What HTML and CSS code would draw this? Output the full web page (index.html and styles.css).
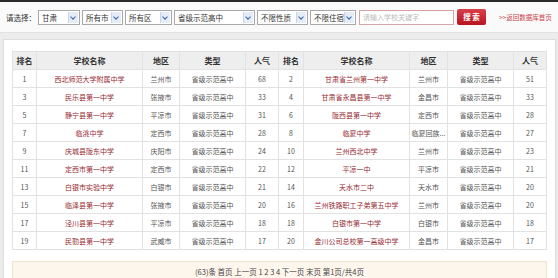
FILE: index.html
```html
<!DOCTYPE html>
<html lang="zh">
<head>
<meta charset="utf-8">
<title>学校排名</title>
<link rel="stylesheet" href="styles.css">
</head>
<body>
<div class="topbar"></div>
<div class="filters">
  <span class="label">请选择：</span>
  <span class="sel w1">甘肃<i class="arr"></i></span>
  <span class="sel w2">所有市<i class="arr"></i></span>
  <span class="sel w3">所有区<i class="arr"></i></span>
  <span class="sel w4">省级示范高中<i class="arr"></i></span>
  <span class="sel w5">不限性质<i class="arr"></i></span>
  <span class="sel w6">不限住宿<i class="arr"></i></span>
  <span class="kw">请输入学校关键字</span>
  <span class="btn">搜 索</span>
  <a class="back" href="#">&gt;&gt;返回数据库首页</a>
</div>
<div class="panel">
  <table class="rank">
    <colgroup>
      <col class="c1"><col class="c2"><col class="c3"><col class="c4"><col class="c5">
      <col class="c6"><col class="c7"><col class="c8"><col class="c9"><col class="c10">
    </colgroup>
    <thead>
      <tr><th>排名</th><th>学校名称</th><th>地区</th><th>类型</th><th>人气</th><th>排名</th><th>学校名称</th><th>地区</th><th>类型</th><th>人气</th></tr>
    </thead>
    <tbody>
      <tr><td>1</td><td class="nm">西北师范大学附属中学</td><td>兰州市</td><td>省级示范高中</td><td>68</td><td>2</td><td class="nm">甘肃省兰州第一中学</td><td>兰州市</td><td>省级示范高中</td><td>51</td></tr>
      <tr><td>3</td><td class="nm">民乐县第一中学</td><td>张掖市</td><td>省级示范高中</td><td>33</td><td>4</td><td class="nm">甘肃省永昌县第一中学</td><td>金昌市</td><td>省级示范高中</td><td>33</td></tr>
      <tr><td>5</td><td class="nm">静宁县第一中学</td><td>平凉市</td><td>省级示范高中</td><td>31</td><td>6</td><td class="nm">陇西县第一中学</td><td>定西市</td><td>省级示范高中</td><td>28</td></tr>
      <tr><td>7</td><td class="nm">临洮中学</td><td>定西市</td><td>省级示范高中</td><td>28</td><td>8</td><td class="nm">临夏中学</td><td>临夏回族...</td><td>省级示范高中</td><td>27</td></tr>
      <tr><td>9</td><td class="nm">庆城县陇东中学</td><td>庆阳市</td><td>省级示范高中</td><td>24</td><td>10</td><td class="nm">兰州西北中学</td><td>兰州市</td><td>省级示范高中</td><td>23</td></tr>
      <tr><td>11</td><td class="nm">定西市第一中学</td><td>定西市</td><td>省级示范高中</td><td>22</td><td>12</td><td class="nm">平凉一中</td><td>平凉市</td><td>省级示范高中</td><td>21</td></tr>
      <tr><td>13</td><td class="nm">白银市实验中学</td><td>白银市</td><td>省级示范高中</td><td>21</td><td>14</td><td class="nm">天水市二中</td><td>天水市</td><td>省级示范高中</td><td>20</td></tr>
      <tr><td>15</td><td class="nm">临泽县第一中学</td><td>张掖市</td><td>省级示范高中</td><td>20</td><td>16</td><td class="nm">兰州铁路职工子弟第五中学</td><td>兰州市</td><td>省级示范高中</td><td>20</td></tr>
      <tr><td>17</td><td class="nm">泾川县第一中学</td><td>平凉市</td><td>省级示范高中</td><td>18</td><td>18</td><td class="nm">白银市第一中学</td><td>白银市</td><td>省级示范高中</td><td>18</td></tr>
      <tr><td>19</td><td class="nm">民勤县第一中学</td><td>武威市</td><td>省级示范高中</td><td>17</td><td>20</td><td class="nm">金川公司总校第一高级中学</td><td>金昌市</td><td>省级示范高中</td><td>17</td></tr>
    </tbody>
  </table>
  <div class="pager">(63)条 首页 上一页 1 2 3 4 下一页 末页 第1页/共4页</div>
</div>
</body>
</html>
```

FILE: styles.css
```css
html, body {
  margin: 0;
  padding: 0;
}
body {
  background: #ececec;
  font-family: "Noto Sans CJK SC", "Noto Sans", sans-serif;
  color: #555;
  width: 558px;
  height: 278px;
  overflow: hidden;
}
.topbar {
  height: 2px;
  background: #2a2a2a;
}
.filters {
  height: 31px;
  background: #fafafa;
  display: flex;
  align-items: center;
  padding-left: 6px;
  box-sizing: border-box;
  border-bottom: 1px solid #e2e2e2;
}
.label {
  font-size: 7.5px;
  color: #333;
  width: 32px;
}
.sel {
  position: relative;
  box-sizing: border-box;
  height: 15px;
  border: 1px solid #a8a8a8;
  background: #fff;
  font-size: 7.5px;
  line-height: 13px;
  color: #333;
  padding-left: 3px;
  margin-right: 2px;
}
.sel .arr {
  position: absolute;
  right: 1px;
  top: 1px;
  width: 9px;
  height: 11px;
  background: #e4ecf7;
  border-left: 1px solid #c8d4e6;
}
.sel .arr::after {
  content: "";
  position: absolute;
  left: 2px;
  top: 3px;
  width: 3px;
  height: 3px;
  border-right: 1.3px solid #3a62a8;
  border-bottom: 1.3px solid #3a62a8;
  transform: rotate(45deg);
}
.w1 { width: 42px; }
.w2 { width: 41px; }
.w3 { width: 47px; }
.w4 { width: 81px; }
.w5 { width: 51px; }
.w6 { width: 46px; margin-right: 3px; }
.kw {
  box-sizing: border-box;
  width: 95px;
  height: 15px;
  border: 1px solid #d6a4a4;
  background: #fff;
  font-size: 7px;
  line-height: 13px;
  color: #bbb;
  padding-left: 3px;
  margin-right: 3px;
}
.btn {
  width: 29px;
  height: 16px;
  background: linear-gradient(#d8404a, #b8141f);
  border-radius: 2px;
  color: #fff;
  font-size: 7.5px;
  font-weight: bold;
  line-height: 16px;
  text-align: center;
  margin-right: 13px;
}
.back {
  font-size: 6.5px;
  color: #c8434a;
  text-decoration: none;
}
.panel {
  margin: 6px 2px 0 3px;
  background: #fff;
  border: 1px solid #dcdcdc;
  border-bottom: 0;
  padding: 11px 8px 0 8px;
  height: 228px;
  overflow: hidden;
}
.rank {
  border-collapse: collapse;
  width: 534px;
  table-layout: fixed;
  border: 1px solid #d8d8d8;
}
.c1 { width: 24px; }
.c2 { width: 106px; }
.c3 { width: 37px; }
.c4 { width: 66px; }
.c5 { width: 33px; }
.c6 { width: 25px; }
.c7 { width: 106px; }
.c8 { width: 38px; }
.c9 { width: 66px; }
.c10 { width: 33px; }
.rank th, .rank td {
  border: 1px solid #e2e2e2;
  text-align: center;
  padding: 0;
  white-space: nowrap;
  overflow: hidden;
}
.rank th {
  height: 17px;
  background: #eeeeee;
  font-size: 8px;
  font-weight: bold;
  color: #333;
}
.rank td {
  height: 17px;
  font-size: 7px;
  color: #555;
}
.rank td.nm {
  color: #962a30;
}
.pager {
  margin-top: 11px;
  height: 30px;
  background: #fdf6ec;
  border: 1px solid #f0e2cc;
  font-size: 7.5px;
  line-height: 19px;
  color: #444;
  text-align: center;
}
```
